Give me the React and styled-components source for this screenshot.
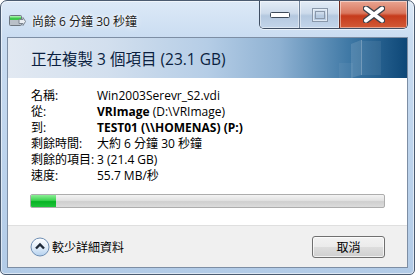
import React from 'react';
import styled, { createGlobalStyle } from 'styled-components';

const UI = '"Segoe UI", "Open Sans", "Noto Sans CJK TC", sans-serif';

const Global = createGlobalStyle`
  html, body { margin: 0; padding: 0; background: #ffffff; }
  body { font-family: ${UI}; font-size: 12px; color: #000; }
`;

const rows = [
  { label: '名稱:', value: 'Win2003Serevr_S2.vdi' },
  { label: '從:', value: 'VRImage', extra: ' (D:\\VRImage)' },
  { label: '到:', value: 'TEST01 (\\\\HOMENAS) (P:)', bold: true },
  { label: '剩餘時間:', value: '大約 6 分鐘 30 秒鐘' },
  { label: '剩餘的項目:', value: '3 (21.4 GB)' },
  { label: '速度:', value: '55.7 MB/秒' },
];

const CopyIcon = () => (
  <svg width="17" height="14" viewBox="0 0 17 14">
    <rect x="0.5" y="1.5" width="12" height="10" rx="1" fill="#b9c0c8" stroke="#6d7680" />
    <rect x="1" y="2" width="11" height="4" fill="#3cc64a" />
    <rect x="1" y="2" width="11" height="1.5" fill="#9ff0a4" />
    <path d="M10 5.5 L14 5.5 L14 3.5 L16.5 7.5 L14 11.5 L14 9.5 L10 9.5 Z" fill="#e9edf2" stroke="#7c8590" />
  </svg>
);

const CloseGlyph = () => (
  <svg width="22" height="17" viewBox="0 0 22 17">
    <path d="M3 2.5 L19 14.5 M19 2.5 L3 14.5" stroke="#3d434c" strokeWidth="6.5" strokeLinecap="round" />
    <path d="M3 2.5 L19 14.5 M19 2.5 L3 14.5" stroke="#ffffff" strokeWidth="4" strokeLinecap="round" />
  </svg>
);

const MinGlyph = () => (
  <svg width="20" height="6" viewBox="0 0 20 6">
    <rect x="0.5" y="0.5" width="19" height="5" rx="1" fill="#ffffff" stroke="#3d4a5a" />
  </svg>
);

const MaxGlyph = () => (
  <svg width="16" height="14" viewBox="0 0 16 14">
    <rect x="0.5" y="0.5" width="15" height="13" fill="none" stroke="#8a98aa" />
    <rect x="3.5" y="3.5" width="9" height="7" fill="none" stroke="#8a98aa" />
    <rect x="1.5" y="1.5" width="13" height="11" fill="none" stroke="#eef3f9" opacity="0.7" />
  </svg>
);

const GlassPanes = () => (
  <svg width="54" height="39" viewBox="0 0 54 39">
    <polygon points="14,5 24,1 24,36 14,39" fill="#ffffff" opacity="0.12" />
    <polygon points="24,1 25,1 25,36 24,36" fill="#ffffff" opacity="0.3" />
    <polygon points="25,2 44,2 44,36 25,36" fill="#ffffff" opacity="0.07" />
    <polygon points="2,24 16,24 16,39 2,39" fill="#ffffff" opacity="0.05" />
  </svg>
);

const ChevronUp = () => (
  <svg width="20" height="20" viewBox="0 0 20 20">
    <defs>
      <linearGradient id="cg" x1="0" y1="0" x2="0" y2="1">
        <stop offset="0" stopColor="#ffffff" />
        <stop offset="0.5" stopColor="#e3eef9" />
        <stop offset="1" stopColor="#b3d0ee" />
      </linearGradient>
    </defs>
    <circle cx="10" cy="10" r="9" fill="url(#cg)" stroke="#6f8fb4" />
    <path d="M6 11.5 L10 7.5 L14 11.5" fill="none" stroke="#1f2a38" strokeWidth="2.4" strokeLinejoin="miter" />
  </svg>
);

const App = () => (
  <>
    <Global />
    <Frame>
      <TitleBar>
        <TitleLeft>
          <CopyIcon />
          <TitleText>尚餘 6 分鐘 30 秒鐘</TitleText>
        </TitleLeft>
        <Caption>
          <CapButton $w={39}><MinGlyph /></CapButton>
          <CapButton $w={39}><MaxGlyph /></CapButton>
          <CapButton $w={67} $close><CloseGlyph /></CapButton>
        </Caption>
      </TitleBar>
      <Client>
        <Header>
          <Instruction>正在複製 3 個項目 (23.1 GB)</Instruction>
          <GlassPanes />
        </Header>
        <Body>
          <Details>
            {rows.map((r) => (
              <React.Fragment key={r.label}>
                <Label>{r.label}</Label>
                <Value $bold={r.bold}>
                  {r.extra ? <strong>{r.value}</strong> : r.value}
                  {r.extra}
                </Value>
              </React.Fragment>
            ))}
          </Details>
          <Progress>
            <Fill style={{ width: `${(25 / 353) * 100}%` }} />
          </Progress>
        </Body>
        <Footer>
          <More>
            <ChevronUp />
            <span>較少詳細資料</span>
          </More>
          <Button>取消</Button>
        </Footer>
      </Client>
    </Frame>
  </>
);

// styled-components
const Frame = styled.div`
  box-sizing: border-box;
  width: 415px;
  height: 275px;
  display: flex;
  flex-direction: column;
  padding: 0 6px 6px 6px;
  border: 1px solid #4b5b70;
  border-radius: 7px 7px 5px 5px;
  background: linear-gradient(to bottom, #dce9f7 0%, #c9dcf1 14%, #bcd3ec 60%, #b2cbe7 100%);
  box-shadow: inset 0 0 0 1px rgba(255, 255, 255, 0.55);
`;
const TitleBar = styled.div`
  height: 36px;
  display: flex;
  justify-content: space-between;
  align-items: flex-start;
`;
const TitleLeft = styled.div`
  display: flex;
  align-items: center;
  gap: 6px;
  padding: 11px 0 0 2px;
`;
const TitleText = styled.span`
  font-size: 12px;
  color: #1b1b1b;
  text-shadow: 0 0 6px #ffffff, 0 0 3px #ffffff;
`;
const Caption = styled.div`
  display: flex;
  height: 27px;
  border: 1px solid #3f4e63;
  border-top: none;
  border-radius: 0 0 5px 5px;
  overflow: hidden;
  box-shadow: 0 1px 0 rgba(255, 255, 255, 0.6);
`;
const CapButton = styled.div`
  width: ${(p) => p.$w}px;
  display: flex;
  align-items: center;
  justify-content: center;
  border-left: 1px solid ${(p) => (p.$close ? '#6e2a1e' : '#6f8198')};
  &:first-child { border-left: none; }
  background: ${(p) =>
    p.$close
      ? 'linear-gradient(to bottom, #e9a592 0%, #d9775e 45%, #c63b1c 55%, #d25a36 100%)'
      : 'linear-gradient(to bottom, #e3ecf6 0%, #cddbeb 45%, #b4c8df 55%, #c3d5ea 100%)'};
  box-shadow: inset 0 0 0 1px rgba(255, 255, 255, 0.45);
`;
const Client = styled.div`
  flex: 1;
  display: flex;
  flex-direction: column;
  border: 1px solid #7d8ea4;
  background: #ffffff;
`;
const Header = styled.div`
  height: 40px;
  display: flex;
  justify-content: space-between;
  align-items: flex-end;
  padding: 0 16px 0 23px;
  background: linear-gradient(to right, #e2e9f2 0%, #d2dfee 25%, #b5cde6 50%, #8eb1d2 68%, #3d77a4 86%, #0d4777 100%);
`;
const Instruction = styled.div`
  align-self: center;
  font-size: 15.5px;
  color: #0b1f3f;
`;
const Body = styled.div`
  flex: 1;
  padding: 10px 22px 0 22px;
`;
const Details = styled.div`
  display: grid;
  grid-template-columns: 66px 1fr;
  line-height: 16px;
  padding-left: 1px;
`;
const Label = styled.div`
  white-space: nowrap;
`;
const Value = styled.div`
  white-space: nowrap;
  font-weight: ${(p) => (p.$bold ? 700 : 400)};
`;
const Progress = styled.div`
  box-sizing: border-box;
  height: 14px;
  margin-top: 10px;
  border: 1px solid #adadad;
  border-radius: 2px;
  overflow: hidden;
  background: linear-gradient(to bottom, #f3f3f3 0%, #e2e2e2 45%, #cfcfcf 55%, #dcdcdc 100%);
`;
const Fill = styled.div`
  height: 100%;
  background: linear-gradient(to bottom, #8cef96 0%, #3bd24f 45%, #07b324 55%, #1fc33a 100%);
`;
const Footer = styled.div`
  height: 41px;
  display: flex;
  align-items: center;
  justify-content: space-between;
  padding: 0 22px;
  background: #f0f0f0;
  border-top: 1px solid #dfdfdf;
`;
const More = styled.div`
  display: flex;
  align-items: center;
  gap: 2px;
  font-size: 12px;
`;
const Button = styled.div`
  box-sizing: border-box;
  width: 73px;
  height: 22px;
  display: flex;
  align-items: center;
  justify-content: center;
  border: 1px solid #707070;
  border-radius: 3px;
  font-size: 12px;
  background: linear-gradient(to bottom, #f2f2f2 0%, #ebebeb 50%, #dddddd 51%, #cfcfcf 100%);
  box-shadow: inset 0 0 0 1px rgba(255, 255, 255, 0.7);
`;

export default App;
